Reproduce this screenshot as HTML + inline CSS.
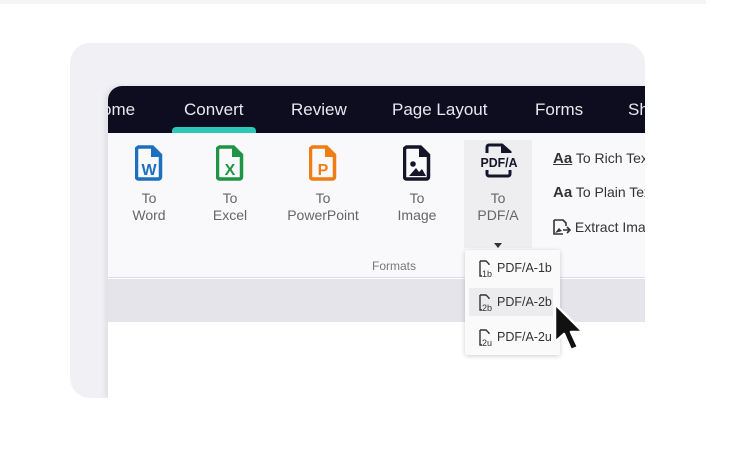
<!DOCTYPE html>
<html><head><meta charset="utf-8"><style>
*{margin:0;padding:0;box-sizing:border-box}
body{width:742px;height:473px;background:#fff;position:relative;overflow:hidden;font-family:"Liberation Sans",sans-serif}
.topbar{position:absolute;left:0;top:0;width:706px;height:4px;background:#f5f5f6}
.card{position:absolute;left:70px;top:43px;width:575px;height:355px;background:#f1f1f5;border-radius:20px 20px 0 20px;overflow:hidden}
.win{position:absolute;left:38px;top:43px;width:537px;height:312px;background:#fff;border-radius:14px 0 0 0;overflow:hidden;box-shadow:-3px 0 6px rgba(0,0,0,.08)}
.hdr{position:absolute;left:0;top:0;width:100%;height:47px;background:#0d0d1f}
.tab{position:absolute;top:14px;color:#e8e8ee;font-size:17px;white-space:nowrap}
.ul{position:absolute;left:64px;top:41px;width:84px;height:6px;background:#2cc7b7;border-radius:4px 4px 0 0}
.rib{position:absolute;left:0;top:47px;width:100%;height:145px;background:#f9f9fb;border-bottom:1px solid #dcdce2}
.gray{position:absolute;left:0;top:193px;width:100%;height:43px;background:#e5e4ea}
.lbl{position:absolute;top:57px;width:100px;text-align:center;color:#666;font-size:14px;line-height:17px}
.hov{position:absolute;left:356px;top:7px;width:68px;height:108px;background:#eeeef1}
.rt{position:absolute;left:445px;color:#333;font-size:14px;white-space:nowrap}
.menu{position:absolute;left:465px;top:250px;width:95px;height:105px;background:#fafafa;box-shadow:0 1px 5px rgba(0,0,0,.2);border-radius:2px}
.mi{position:absolute;left:4px;width:84px;height:28px;font-size:12.5px;color:#333;padding-left:28px;line-height:28px}
</style></head><body>
<div class="topbar"></div>
<div class="card">
 <div class="win">
  <div class="hdr">
   <div class="tab" style="left:-6px">ome</div>
   <div class="tab" style="left:76px">Convert</div>
   <div class="tab" style="left:183px">Review</div>
   <div class="tab" style="left:284px">Page Layout</div>
   <div class="tab" style="left:427px">Forms</div>
   <div class="tab" style="left:520px">Sh</div>
   <div class="ul"></div>
  </div>
  <div class="rib">
   <div class="hov"></div>
   <svg style="position:absolute;left:27px;top:12px" width="28" height="36" viewBox="0 0 28 36"><path d="M3.5 2h14l8 8v22a2 2 0 0 1-2 2h-20a2 2 0 0 1-2-2V3.5z" fill="none" stroke="#1f6fbf" stroke-width="3.5"/><path d="M16 2v10h10z" fill="#1f6fbf"/><text x="14" y="30" font-size="16" font-weight="bold" fill="#1f6fbf" text-anchor="middle" font-family="Liberation Sans">W</text></svg>
   <svg style="position:absolute;left:108px;top:12px" width="28" height="36" viewBox="0 0 28 36"><path d="M3.5 2h14l8 8v22a2 2 0 0 1-2 2h-20a2 2 0 0 1-2-2V3.5z" fill="none" stroke="#1e9444" stroke-width="3.5"/><path d="M16 2v10h10z" fill="#1e9444"/><text x="14" y="30" font-size="16" font-weight="bold" fill="#1e9444" text-anchor="middle" font-family="Liberation Sans">X</text></svg>
   <svg style="position:absolute;left:201px;top:12px" width="28" height="36" viewBox="0 0 28 36"><path d="M3.5 2h14l8 8v22a2 2 0 0 1-2 2h-20a2 2 0 0 1-2-2V3.5z" fill="none" stroke="#f07c14" stroke-width="3.5"/><path d="M16 2v10h10z" fill="#f07c14"/><text x="14" y="30" font-size="16" font-weight="bold" fill="#f07c14" text-anchor="middle" font-family="Liberation Sans">P</text></svg>
   <svg style="position:absolute;left:295px;top:12px" width="28" height="36" viewBox="0 0 28 36"><path d="M3.5 2h14l8 8v22a2 2 0 0 1-2 2h-20a2 2 0 0 1-2-2V3.5z" fill="none" stroke="#15152a" stroke-width="3.5"/><path d="M16 2v10h10z" fill="#15152a"/><circle cx="10" cy="19" r="2.8" fill="#15152a"/><path d="M6 31l7-8 3 4 3-3 4 7z" fill="#15152a"/></svg>
   <svg style="position:absolute;left:371px;top:8px" width="40" height="40" viewBox="0 0 40 40"><path d="M8 12V6a2 2 0 0 1 2-2h13l8 7v1" fill="none" stroke="#15152a" stroke-width="3"/><path d="M22 4v8h9z" fill="#15152a"/><path d="M8 29v4a2 2 0 0 0 2 2h19a2 2 0 0 0 2-2v-4" fill="none" stroke="#15152a" stroke-width="3"/><text x="20" y="26" font-size="13" font-weight="bold" fill="#15152a" text-anchor="middle" font-family="Liberation Sans" textLength="37" lengthAdjust="spacingAndGlyphs">PDF/A</text></svg>
   <div class="lbl" style="left:-9px">To<br>Word</div>
   <div class="lbl" style="left:72px">To<br>Excel</div>
   <div class="lbl" style="left:165px">To<br>PowerPoint</div>
   <div class="lbl" style="left:259px">To<br>Image</div>
   <div class="lbl" style="left:340px">To<br>PDF/A</div>
   <div style="position:absolute;left:386px;top:110px;width:0;height:0;border-left:4px solid transparent;border-right:4px solid transparent;border-top:5px solid #333"></div>
   <div style="position:absolute;left:264px;top:126px;font-size:12px;color:#777">Formats</div>
   <div class="rt" style="top:17px"><span style="font-weight:bold;text-decoration:underline;font-size:15px">Aa</span> To Rich Text</div>
   <div class="rt" style="top:51px"><span style="font-weight:bold;font-size:15px">Aa</span> To Plain Text</div>
   <div class="rt" style="top:86px"><svg width="18" height="16" viewBox="0 0 18 16" style="vertical-align:-3px"><path d="M1 1h9l3 3v3M1 1v14h9" fill="none" stroke="#333" stroke-width="1.6"/><path d="M2 14l4-5 3 3z" fill="#333"/><path d="M10 11h7M14 8l3 3-3 3" fill="none" stroke="#333" stroke-width="1.6"/></svg> Extract Images</div>
  </div>
  <div class="gray"></div>
 </div>
</div>
<div class="menu">
 <div class="mi" style="top:4px">PDF/A-1b</div>
 <div class="mi" style="top:38px;background:#ececef">PDF/A-2b</div>
 <div class="mi" style="top:73px">PDF/A-2u</div>
 <svg style="position:absolute;left:12px;top:10px" width="18" height="18"><path d="M3 1h6l3 3v1M3 1v15h2" fill="none" stroke="#333" stroke-width="1.4"/><text x="5" y="17" font-size="9" fill="#333" font-family="Liberation Sans">1b</text></svg>
 <svg style="position:absolute;left:12px;top:44px" width="18" height="18"><path d="M3 1h6l3 3v1M3 1v15h2" fill="none" stroke="#333" stroke-width="1.4"/><text x="5" y="17" font-size="9" fill="#333" font-family="Liberation Sans">2b</text></svg>
 <svg style="position:absolute;left:12px;top:79px" width="18" height="18"><path d="M3 1h6l3 3v1M3 1v15h2" fill="none" stroke="#333" stroke-width="1.4"/><text x="5" y="17" font-size="9" fill="#333" font-family="Liberation Sans">2u</text></svg>
</div>
<svg style="position:absolute;left:550px;top:300px" width="40" height="56" viewBox="0 0 40 56"><path d="M5 4v38l9-8 7 16 7-3-7-15h12z" fill="#111" stroke="#fff" stroke-width="2.5" stroke-linejoin="round"/></svg>
</body></html>
